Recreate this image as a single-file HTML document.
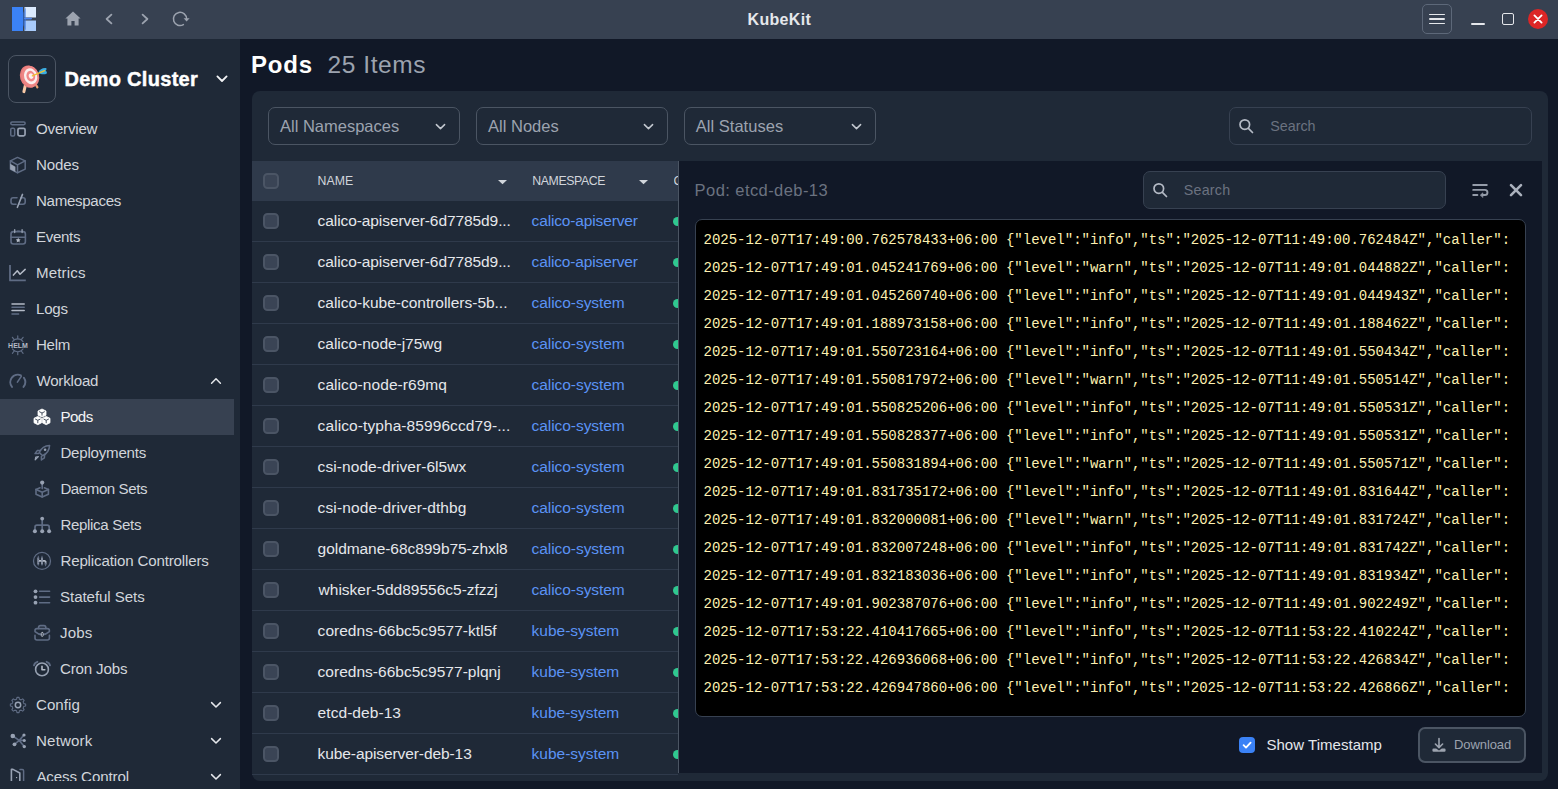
<!DOCTYPE html>
<html><head><meta charset="utf-8"><title>KubeKit</title>
<style>
*{box-sizing:border-box;margin:0;padding:0}
html,body{width:1558px;height:789px;overflow:hidden;background:#111827;font-family:"Liberation Sans",sans-serif;color:#e5e7eb}
svg{display:block;overflow:visible}
.abs{position:absolute}
#tb{position:absolute;left:0;top:0;width:1558px;height:39px;background:#374151}
#tb .title{position:absolute;left:749px;top:10px;font-weight:bold;font-size:16px;line-height:20px;color:#e5e7eb;white-space:nowrap}
#sb{position:absolute;left:0;top:39px;width:240px;height:750px;background:#1f2937;overflow:hidden}
#nav{position:absolute;left:0;top:0;width:240px;height:742px;overflow:hidden}
.ni{position:absolute;left:0;width:234px;height:36px}
.ni .t{position:absolute;left:36px;top:8px;font-size:15.1px;line-height:20px;color:#d1d5db;white-space:nowrap}
.ni.sub .t{left:60px}
.ni svg.ic{position:absolute;left:8px;top:8px;width:20px;height:20px}
.ni.sub svg.ic{left:32px}
.ni svg.ch{position:absolute;left:209px;top:12px;width:14px;height:12px}
.ni.sel{background:#374151}
.ni.sel .t{color:#f3f4f6}
#main{position:absolute;left:240px;top:39px;width:1318px;height:750px;background:#111827}
#h1{position:absolute;left:252px;top:50px;font-size:24px;line-height:30px;font-weight:bold;color:#fff;white-space:nowrap}
#h2{position:absolute;left:328px;top:50px;font-size:24.5px;line-height:30px;color:#9ca3af;white-space:nowrap}
#card{position:absolute;left:252px;top:91px;width:1296px;height:689.5px;background:#1f2937;border-radius:8px;overflow:hidden}
.sel-box{position:absolute;top:107px;width:192px;height:38px;border:1px solid #4b5563;border-radius:7px;background:#1f2937}
.sel-box .t{position:absolute;left:10px;top:8px;font-size:16.5px;line-height:20px;color:#9ca3af;white-space:nowrap}
.sel-box svg{position:absolute;left:166px;top:15px;width:11px;height:8px}
.srch{position:absolute;width:303px;height:38px;border:1px solid #374151;border-radius:7px;background:#1f2937}
.srch .t{position:absolute;left:40px;top:9px;font-size:14.3px;line-height:18px;color:#6b7280;white-space:nowrap}
.srch svg{position:absolute;left:9px;top:11px;width:16px;height:16px}
#thead{position:absolute;left:252px;top:161px;width:426px;height:40px;background:#2f3a4b}
.th{position:absolute;top:173.5px;font-size:12.3px;line-height:14px;color:#d1d5db;white-space:nowrap}
.cb{position:absolute;width:16px;height:16px;border-radius:4.5px;background:#3a4455;border:2px solid #4b5565}
.row{position:absolute;left:252px;width:426px;height:41px;border-bottom:1px solid #2f3a4b;overflow:hidden}
.row .n{position:absolute;left:66px;top:10px;font-size:15.5px;line-height:20px;color:#e5e7eb;white-space:nowrap}
.row .ns{position:absolute;left:280px;top:10px;font-size:15.5px;line-height:20px;color:#5b93f5;white-space:nowrap}
.row .dot{position:absolute;left:421px;top:15.5px;width:9px;height:9px;border-radius:5px;background:#30c890}
#panel{position:absolute;left:678px;top:161px;width:864px;height:612px;background:#111827;border-left:1px solid #4b5563}
#ptitle{position:absolute;left:695px;top:180px;font-size:16.5px;line-height:20px;color:#6b7280;white-space:nowrap}
#log{position:absolute;left:695px;top:219px;width:831px;height:498px;background:#000;border:1px solid #374151;border-radius:7px;overflow:hidden;padding:6px 0 0 7.5px;font-family:"Liberation Mono",monospace;font-size:14px;line-height:28px;color:#fdf0b0;white-space:pre}
#chk{position:absolute;left:1239px;top:737px;width:16px;height:16px;border-radius:4px;background:#3b82f6}
#chk svg{position:absolute;left:3px;top:3px;width:10px;height:10px}
#st{position:absolute;left:1266px;top:735px;font-size:15px;line-height:20px;color:#e5e7eb;white-space:nowrap}
#dl{position:absolute;left:1418px;top:727px;width:108px;height:36px;border:2px solid #4b5563;border-radius:7px;background:#1f2937}
#dl .t{position:absolute;left:34px;top:8px;font-size:13px;line-height:16px;color:#9ca3af;white-space:nowrap}
#dl svg{position:absolute;left:11px;top:8px;width:16px;height:16px}

</style></head><body>
<div id="tb">
<svg class="abs" style="left:12px;top:7px" width="24" height="24" viewBox="0 0 24 24"><rect x="0" y="0" width="11" height="24" fill="#3b82f6"/><rect x="12.5" y="0" width="11.5" height="10.5" fill="#dbeafe"/><rect x="12.5" y="13.5" width="11.5" height="10.5" fill="#a9cbfb"/><path d="M11 6 L14 0 V24 L11 18Z" fill="#2f6fe0" opacity="0.55"/><rect x="12" y="10.8" width="8" height="1.6" rx="0.8" fill="#4f86f0"/></svg>
<svg class="abs" style="left:65px;top:11px" width="16" height="15" viewBox="0 0 16 15"><path d="M8 0.6 L0.4 7.6 H2.4 V14.6 H6.4 V10 H9.6 V14.6 H13.6 V7.6 H15.6 Z" fill="#9ca3af"/></svg>
<svg class="abs" style="left:104px;top:13px" width="10" height="12" viewBox="0 0 10 12" fill="none" stroke="#9ca3af" stroke-width="1.8" stroke-linecap="round" stroke-linejoin="round"><path d="M7.4 1.6 L2.6 6 L7.4 10.4"/></svg>
<svg class="abs" style="left:140px;top:13px" width="10" height="12" viewBox="0 0 10 12" fill="none" stroke="#9ca3af" stroke-width="1.8" stroke-linecap="round" stroke-linejoin="round"><path d="M2.6 1.6 L7.4 6 L2.6 10.4"/></svg>
<svg class="abs" style="left:172px;top:11px" width="18" height="16" viewBox="0 0 18 16" fill="none" stroke="#9ca3af" stroke-width="1.5" stroke-linecap="round"><path d="M14.6 8 A6.6 6.6 0 1 0 11.4 13.6"/><path d="M11.6 7.2 H17.6 L14.6 10.6Z" fill="#9ca3af" stroke="none"/></svg>
<div class="title" id="ttl" style="letter-spacing:0.303px;margin-left:-1.40px;">KubeKit</div>
<div class="abs" style="left:1422px;top:4px;width:30px;height:30px;border:1.5px solid #5d6879;border-radius:5px"></div>
<div class="abs" style="left:1429px;top:13.7px;width:16px;height:1.7px;background:#e5e7eb;border-radius:1px"></div>
<div class="abs" style="left:1429px;top:18.1px;width:16px;height:1.7px;background:#e5e7eb;border-radius:1px"></div>
<div class="abs" style="left:1429px;top:22.5px;width:16px;height:1.7px;background:#e5e7eb;border-radius:1px"></div>
<div class="abs" style="left:1471px;top:23px;width:14px;height:2px;background:#e5e7eb;border-radius:1px"></div>
<div class="abs" style="left:1502px;top:13px;width:12px;height:12px;border:1.5px solid #e5e7eb;border-radius:2px"></div>
<div class="abs" style="left:1528px;top:9px;width:20px;height:20px;border-radius:10px;background:#dc2626"></div>
<svg class="abs" style="left:1533px;top:14px" width="10" height="10" viewBox="0 0 10 10" fill="none" stroke="#fff" stroke-width="1.8" stroke-linecap="round"><path d="M1.4 1.4 L8.6 8.6 M8.6 1.4 L1.4 8.6"/></svg>
</div>
<div id="sb">
<div class="abs" style="left:8px;top:16px;width:48px;height:48px;border:1.3px solid #4b5563;border-radius:8px"></div>
<svg class="abs" style="left:18px;top:23px" width="32" height="32" viewBox="0 0 32 32">

<path d="M7.6 22.4 L5.9 29.6" stroke="#f9c9a6" stroke-width="3" stroke-linecap="round"/>
<path d="M18.4 23.6 L19.4 25.4" stroke="#eaa070" stroke-width="2.2" stroke-linecap="round"/>
<ellipse cx="11.3" cy="14.6" rx="9.3" ry="11.3" transform="rotate(-17 11.3 14.6)" fill="#e87a7a"/>
<ellipse cx="12.3" cy="14.5" rx="8.8" ry="10.9" transform="rotate(-17 12.3 14.5)" fill="#ee8584"/>
<ellipse cx="12.6" cy="14.3" rx="6.5" ry="8.1" transform="rotate(-17 12.6 14.3)" fill="#fbeeee"/>
<ellipse cx="12.8" cy="14.2" rx="4.3" ry="5.4" transform="rotate(-17 12.8 14.2)" fill="#f08888"/>
<ellipse cx="13" cy="14.1" rx="2.2" ry="2.8" transform="rotate(-17 13 14.1)" fill="#fdf4f2"/>
<path d="M20.4 10.4 C21.4 7.4 25.4 5.4 28.4 6.2 C28.8 7.4 28.2 8.2 27.6 8.8 C28.6 9.2 29.2 10.2 28.8 11.4 C26.4 12.8 22.8 12.6 20.4 10.4Z" fill="#3cade0"/>
<path d="M14.4 13.9 L26.6 8.6" stroke="#f0c030" stroke-width="1.3" stroke-linecap="round"/>
</svg>
<div class="abs" id="dc" style="left:64px;top:27px;font-size:20px;line-height:26px;font-weight:bold;color:#fff;white-space:nowrap;-webkit-text-stroke:0.45px #fff;letter-spacing:0.310px;margin-left:0.40px;">Demo Cluster</div>
<svg class="abs" style="left:215px;top:35px" width="14" height="10" viewBox="0 0 14 10" fill="none" stroke="#f3f4f6" stroke-width="1.8" stroke-linecap="round" stroke-linejoin="round"><path d="M2.4 2.4 L7 7 L11.6 2.4"/></svg>
<div id="nav">
<div class="ni" style="top:72px"><svg class="ic" viewBox="0 0 20 20" fill="none" stroke="#5f6c84" stroke-width="1.5" stroke-linecap="round" stroke-linejoin="round"><rect x="2.75" y="3.05" width="14.4" height="2.6" rx="1.3"/><rect x="2.75" y="9.25" width="3.9" height="7.7" rx="1.3"/><rect x="9.95" y="9.35" width="7.1" height="7.5" rx="1.5" stroke="#98a2b3" stroke-width="1.7"/></svg><span class="t" id="nv0" style="letter-spacing:-0.202px;margin-left:0.00px;">Overview</span></div>
<div class="ni" style="top:108px"><svg class="ic" viewBox="0 0 20 20" fill="none" stroke="#5f6c84" stroke-width="1.5" stroke-linecap="round" stroke-linejoin="round"><path d="M9.5 2.4 L17.2 5.9 V14.1 L9.5 17.8 L2.4 14.1 V5.9 Z"/><path d="M2.4 5.9 L9.5 9.9 L17.2 5.9 M9.5 9.9 V17.8"/><path d="M2.2 8.8 L7.4 11.7 V17 L2.2 14.2 Z" fill="#98a2b3" stroke="none"/></svg><span class="t" id="nv1" style="letter-spacing:-0.150px;margin-left:0.00px;">Nodes</span></div>
<div class="ni" style="top:144px"><svg class="ic" viewBox="0 0 20 20" fill="none" stroke="#5f6c84" stroke-width="1.6" stroke-linecap="round" stroke-linejoin="round"><path d="M9 6.7 H5.2 Q3 6.7 3 8.9 V11 Q3 13.2 5.2 13.2 H8"/><path d="M13 6.7 H15 Q17.2 6.7 17.2 8.9 V11 Q17.2 13.2 15 13.2 H11.6"/><path d="M14.5 3.4 L9.4 16.3" stroke="#98a2b3" stroke-width="1.6"/></svg><span class="t" id="nv2" style="letter-spacing:-0.309px;margin-left:0.00px;">Namespaces</span></div>
<div class="ni" style="top:180px"><svg class="ic" viewBox="0 0 20 20" fill="none" stroke="#5f6c84" stroke-width="1.6" stroke-linecap="round" stroke-linejoin="round"><rect x="3" y="4.6" width="14.4" height="12.4" rx="2.4"/><path d="M3 10.2 H17.4"/><path d="M6.7 2.6 V5.6 M14.1 2.6 V5.6" stroke="#98a2b3" stroke-width="1.3"/><path d="M9.4 4.2 H11.4" stroke-width="1.2"/><path d="M10.2 10.8 l0.75 1.55 1.7 0.22 -1.25 1.18 0.32 1.7 -1.52 -0.85 -1.52 0.85 0.32 -1.7 -1.25 -1.18 1.7 -0.22z" fill="#b4bbc7" stroke="none"/></svg><span class="t" id="nv3" style="letter-spacing:-0.320px;margin-left:0.00px;">Events</span></div>
<div class="ni" style="top:216px"><svg class="ic" viewBox="0 0 20 20" fill="none" stroke="#5f6c84" stroke-width="1.5" stroke-linecap="round" stroke-linejoin="round"><path d="M2 2 V17.4 H17.8" stroke-width="1.8" stroke-linecap="butt"/><path d="M5.4 12.1 L9.3 7.7 L12 11.2 L17.2 6.4" stroke="#b4bbc7" stroke-width="1.5"/></svg><span class="t" id="nv4" style="letter-spacing:0.152px;margin-left:0.00px;">Metrics</span></div>
<div class="ni" style="top:252px"><svg class="ic" viewBox="0 0 20 20" fill="none" stroke="#5f6c84" stroke-width="1.5" stroke-linecap="round" stroke-linejoin="round"><path d="M4 4.9 H16.2 M4 11.6 H16.2" stroke="#b4bbc7"/><path d="M4 8.3 H16.2 M4 14.9 H10.6"/></svg><span class="t" id="nv5" style="letter-spacing:-0.268px;margin-left:0.00px;">Logs</span></div>
<div class="ni" style="top:288px"><svg class="ic" viewBox="0 0 20 20" fill="none" stroke="#5f6c84" stroke-width="1.2" stroke-linecap="round"><path d="M4.5 6.7 A6.4 6.4 0 0 1 15 6.7"/><path d="M4.5 14 A6.4 6.4 0 0 0 15 14"/><path d="M9.75 0.9 V3.3 M9.75 17.3 V19.7 M4.4 2.3 L6.2 4.6 M15.1 2.3 L13.3 4.6 M4.4 18.3 L6.2 16 M15.1 18.3 L13.3 16"/><text x="0.1" y="12.9" font-family="Liberation Sans" font-weight="bold" font-size="7.2" fill="#b4bbc7" stroke="none" textLength="19.8" lengthAdjust="spacingAndGlyphs">HELM</text></svg><span class="t" id="nv6" style="letter-spacing:-0.333px;margin-left:0.00px;">Helm</span></div>
<div class="ni" style="top:324px"><svg class="ic" viewBox="0 0 20 20" fill="none" stroke="#5f6c84" stroke-width="1.9" stroke-linecap="round" stroke-linejoin="round"><path d="M4 15.9 A7.5 7.5 0 0 1 12.9 4.3"/><path d="M15.9 6.8 A7.5 7.5 0 0 1 15.5 15.9"/><path d="M9.4 11.1 L13.3 5.4" stroke-width="1.6"/></svg><span class="t" id="nv7" style="letter-spacing:-0.195px;margin-left:0.40px;">Workload</span><svg class="ch" viewBox="0 0 14 12" fill="none" stroke="#e5e7eb" stroke-width="1.5" stroke-linecap="round" stroke-linejoin="round"><path d="M2.6 8.2 L7 3.8 L11.4 8.2"/></svg></div>
<div class="ni sub sel" style="top:360px"><svg class="ic" viewBox="0 0 20 20" fill="#fff" stroke="#fff" stroke-width="0.8" stroke-linejoin="round"><path d="M10 2 L14 4 V8.2 L10 10 L6 8.2 V4 Z"/><path d="M5.8 9.4 L9.6 11.3 V15.8 L5.8 17.7 L2 15.8 V11.3 Z"/><path d="M14.2 9.4 L18 11.3 V15.8 L14.2 17.7 L10.4 15.8 V11.3 Z"/><g fill="none" stroke="#374151" stroke-width="0.9"><path d="M7.2 4.6 L10 6 L12.8 4.6 M10 6 V8.6"/><path d="M3.2 12 L5.8 13.3 L8.4 12 M5.8 13.3 V16.2"/><path d="M11.6 12 L14.2 13.3 L16.8 12 M14.2 13.3 V16.2"/></g></svg><span class="t" id="nv8" style="letter-spacing:-0.532px;margin-left:0.40px;">Pods</span></div>
<div class="ni sub" style="top:396px"><svg class="ic" viewBox="0 0 20 20" fill="none" stroke="#5f6c84" stroke-width="1.5" stroke-linecap="round" stroke-linejoin="round"><path d="M17.6 2.4 C12.6 2.6 9.2 5.2 7.2 9.4 L10.6 12.8 C14.8 10.8 17.4 7.4 17.6 2.4Z"/><path d="M8.6 7.4 L5.2 7.6 L3 10.6 L6.6 10.6"/><path d="M12.6 11.4 L12.4 14.8 L9.4 17 L9.4 13.4"/><circle cx="13.1" cy="6.8" r="1.3" fill="#98a2b3" stroke="none"/><path d="M6.4 13.6 L3.2 16.8 L3.8 14 Z" stroke="#98a2b3" stroke-width="1.2"/></svg><span class="t" id="nv9" style="letter-spacing:-0.220px;margin-left:0.40px;">Deployments</span></div>
<div class="ni sub" style="top:432px"><svg class="ic" viewBox="0 0 20 20" fill="none" stroke="#5f6c84" stroke-width="1.6" stroke-linecap="round" stroke-linejoin="round"><path d="M8 8.8 L4 10.4 V15.2 L10.2 18 L16.4 15.2 V10.4 L12.4 8.8"/><path d="M4 10.4 L10.2 13.2 L16.4 10.4 M10.2 13.2 V18"/><path d="M10.2 5 V9.6"/><circle cx="10.2" cy="3.6" r="2.1" fill="#98a2b3" stroke="none"/></svg><span class="t" id="nv10" style="letter-spacing:-0.440px;margin-left:0.40px;">Daemon Sets</span></div>
<div class="ni sub" style="top:468px"><svg class="ic" viewBox="0 0 20 20" fill="none" stroke="#5f6c84" stroke-width="1.5" stroke-linecap="round" stroke-linejoin="round"><path d="M10.2 4.4 V15 M3 15.4 V12.2 Q3 10.2 5 10.2 H15.2 Q17.2 10.2 17.2 12.2 V15.4" stroke-width="1.7"/><circle cx="10.2" cy="3.6" r="1.9" fill="#98a2b3" stroke="none"/><circle cx="2.9" cy="16.3" r="2" fill="#98a2b3" stroke="none"/><circle cx="10.2" cy="16.3" r="2" fill="#98a2b3" stroke="none"/><circle cx="17.1" cy="16.3" r="2" fill="#98a2b3" stroke="none"/></svg><span class="t" id="nv11" style="letter-spacing:-0.333px;margin-left:0.40px;">Replica Sets</span></div>
<div class="ni sub" style="top:504px"><svg class="ic" viewBox="0 0 20 20" fill="none" stroke="#5f6c84" stroke-width="1.5" stroke-linecap="round" stroke-linejoin="round"><circle cx="10" cy="9.9" r="8.5" stroke-width="1.3"/><path d="M6.3 6.6 V13.4 M10 6.6 V13.4 M13.6 9.9 V13.4 M6.3 9.9 H13.6" stroke="#b4bbc7" stroke-width="1.7" stroke-linecap="butt"/><path d="M6.3 5.2 V14.8 M10 5.2 V14.8 M13.6 12 V14.8" stroke-width="1" stroke-dasharray="1 1"/></svg><span class="t" id="nv12" style="letter-spacing:-0.154px;margin-left:0.40px;">Replication Controllers</span></div>
<div class="ni sub" style="top:540px"><svg class="ic" viewBox="0 0 20 20" fill="none" stroke="#5f6c84" stroke-width="1.5" stroke-linecap="round" stroke-linejoin="round"><path d="M7.6 4.3 H17.6 M7.6 10.1 H17.6 M7.6 15.7 H17.6" stroke-width="1.6"/><circle cx="3.5" cy="4.3" r="1.9" fill="#98a2b3" stroke="none"/><circle cx="3.5" cy="10.1" r="1.9" fill="#98a2b3" stroke="none"/><circle cx="3.5" cy="15.7" r="1.9" fill="#98a2b3" stroke="none"/></svg><span class="t" id="nv13" style="letter-spacing:-0.066px;margin-left:0.00px;">Stateful Sets</span></div>
<div class="ni sub" style="top:576px"><svg class="ic" viewBox="0 0 20 20" fill="none" stroke="#5f6c84" stroke-width="1.6" stroke-linecap="round" stroke-linejoin="round"><path d="M3 12.4 V15 Q3 17 5 17 H15.4 Q17.4 17 17.4 15 V12.4"/><path d="M5 5.6 H15.4 Q17.4 5.6 17.4 7.6 V8.6 Q14 11.6 10.2 11.6 Q6.4 11.6 3 8.6 V7.6 Q3 5.6 5 5.6Z"/><path d="M6.6 5.4 V4.4 Q6.6 2.6 8.4 2.6 H12 Q13.8 2.6 13.8 4.4 V5.4"/><rect x="9.3" y="9.4" width="1.8" height="4" rx="0.9" fill="#1f2937" stroke="#b4bbc7" stroke-width="1"/></svg><span class="t" id="nv14" style="letter-spacing:0.135px;margin-left:0.00px;">Jobs</span></div>
<div class="ni sub" style="top:612px"><svg class="ic" viewBox="0 0 20 20" fill="none" stroke="#5f6c84" stroke-width="1.5" stroke-linecap="round" stroke-linejoin="round"><circle cx="10" cy="10.4" r="6.4" stroke="#98a2b3" stroke-width="1.6"/><path d="M10 7.2 V10.8 H12.8" stroke="#b4bbc7" stroke-width="1.6"/><path d="M2 6.4 Q2.6 3.6 5.4 2.8 M18 6.4 Q17.4 3.6 14.6 2.8" stroke-width="1.9"/></svg><span class="t" id="nv15" style="letter-spacing:-0.166px;margin-left:0.00px;">Cron Jobs</span></div>
<div class="ni" style="top:648px"><svg class="ic" viewBox="0 0 20 20" fill="none" stroke="#5f6c84" stroke-width="1.5" stroke-linecap="round" stroke-linejoin="round"><path d="M8.60 4.17 L8.97 2.37 L11.03 2.37 L11.40 4.17 L13.13 4.88 L14.67 3.88 L16.12 5.33 L15.12 6.87 L15.83 8.60 L17.63 8.97 L17.63 11.03 L15.83 11.40 L15.12 13.13 L16.12 14.67 L14.67 16.12 L13.13 15.12 L11.40 15.83 L11.03 17.63 L8.97 17.63 L8.60 15.83 L6.87 15.12 L5.33 16.12 L3.88 14.67 L4.88 13.13 L4.17 11.40 L2.37 11.03 L2.37 8.97 L4.17 8.60 L4.88 6.87 L3.88 5.33 L5.33 3.88 L6.87 4.88Z" stroke-width="1.1"/><circle cx="10" cy="10" r="2.7" stroke="#98a2b3" stroke-width="1.5"/></svg><span class="t" id="nv16" style="letter-spacing:0.040px;margin-left:0.00px;">Config</span><svg class="ch" viewBox="0 0 14 12" fill="none" stroke="#e5e7eb" stroke-width="1.5" stroke-linecap="round" stroke-linejoin="round"><path d="M2.6 3.6 L7 8 L11.4 3.6"/></svg></div>
<div class="ni" style="top:684px"><svg class="ic" viewBox="0 0 20 20" fill="none" stroke="#5f6c84" stroke-width="1.5" stroke-linecap="round" stroke-linejoin="round"><path d="M4.8 5 L11.2 9.4 L16 4 M6.5 13.3 L11.2 9.4 L16.3 15.6 M11.2 9.4 H16.3" stroke-width="1.6"/><circle cx="4.8" cy="5" r="2.3" fill="#98a2b3" stroke="none"/><circle cx="16" cy="4" r="1.6" fill="#98a2b3" stroke="none"/><circle cx="16.3" cy="9.4" r="1.5" fill="#98a2b3" stroke="none"/><circle cx="6.5" cy="13.3" r="1.9" fill="#98a2b3" stroke="none"/><circle cx="16.3" cy="15.6" r="1.7" fill="#98a2b3" stroke="none"/></svg><span class="t" id="nv17" style="letter-spacing:0.167px;margin-left:0.00px;">Network</span><svg class="ch" viewBox="0 0 14 12" fill="none" stroke="#e5e7eb" stroke-width="1.5" stroke-linecap="round" stroke-linejoin="round"><path d="M2.6 3.6 L7 8 L11.4 3.6"/></svg></div>
<div class="ni" style="top:720px"><svg class="ic" viewBox="0 0 20 20" fill="none" stroke="#5f6c84" stroke-width="1.5" stroke-linecap="round" stroke-linejoin="round"><path d="M12 2.4 H14.2 Q15.6 2.4 15.6 3.8 V17"/><path d="M3.4 17 V2.4 H5 L11.8 6 V17" stroke="#98a2b3" stroke-width="1.6"/><circle cx="8.6" cy="10.6" r="0.7" fill="#b4bbc7" stroke="none"/></svg><span class="t" id="nv18" style="letter-spacing:-0.098px;margin-left:0.40px;">Acess Control</span><svg class="ch" viewBox="0 0 14 12" fill="none" stroke="#e5e7eb" stroke-width="1.5" stroke-linecap="round" stroke-linejoin="round"><path d="M2.6 3.6 L7 8 L11.4 3.6"/></svg></div>
</div></div>
<div id="main"></div>
<div id="h1" style="letter-spacing:0.800px;margin-left:-1.00px;">Pods</div><div id="h2" style="letter-spacing:0.597px;margin-left:-0.60px;">25 Items</div>
<div id="card"></div>
<div class="sel-box" style="left:268px"><span class="t" id="s1" style="letter-spacing:-0.000px;margin-left:1.00px;">All Namespaces</span><svg viewBox="0 0 11 8" fill="none" stroke="#c3c8d0" stroke-width="1.5" stroke-linecap="round" stroke-linejoin="round"><path d="M1.4 1.6 L5.5 5.6 L9.6 1.6"/></svg></div>
<div class="sel-box" style="left:476px"><span class="t" id="s2" style="letter-spacing:0.016px;margin-left:1.00px;">All Nodes</span><svg viewBox="0 0 11 8" fill="none" stroke="#c3c8d0" stroke-width="1.5" stroke-linecap="round" stroke-linejoin="round"><path d="M1.4 1.6 L5.5 5.6 L9.6 1.6"/></svg></div>
<div class="sel-box" style="left:684px"><span class="t" id="s3" style="letter-spacing:0.020px;margin-left:0.80px;">All Statuses</span><svg viewBox="0 0 11 8" fill="none" stroke="#c3c8d0" stroke-width="1.5" stroke-linecap="round" stroke-linejoin="round"><path d="M1.4 1.6 L5.5 5.6 L9.6 1.6"/></svg></div>
<div class="srch" style="left:1229px;top:107px"><svg viewBox="0 0 16 16" fill="none" stroke="#b4bac5" stroke-width="1.7" stroke-linecap="round"><circle cx="5.8" cy="5.6" r="4.8"/><path d="M9.4 9.3 L13.5 13.5"/></svg><span class="t" id="q1" style="letter-spacing:0.000px;margin-left:0.20px;">Search</span></div>
<div id="thead"></div>
<span class="cb" style="left:263px;top:173px"></span>
<span class="th" id="th1" style="left:318px;letter-spacing:0.002px;margin-left:-0.40px;">NAME</span>
<svg class="abs" style="left:497.5px;top:179.5px" width="9" height="4.2" viewBox="0 0 9 4.2"><path d="M0 0 H9 L4.5 4.2Z" fill="#d1d5db"/></svg>
<span class="th" id="th2" style="left:532px;letter-spacing:-0.372px;margin-left:0.20px;">NAMESPACE</span>
<svg class="abs" style="left:638.5px;top:179.5px" width="9" height="4.2" viewBox="0 0 9 4.2"><path d="M0 0 H9 L4.5 4.2Z" fill="#d1d5db"/></svg>
<span class="th" style="left:673.5px;width:4.5px;overflow:hidden">CONTAINERS</span>
<div class="row" style="top:201px"><span class="cb" style="left:11px;top:12px"></span><span class="n" id="rn0" style="letter-spacing:-0.085px;margin-left:-0.40px;">calico-apiserver-6d7785d9...</span><span class="ns" id="rs0" style="letter-spacing:-0.150px;margin-left:-0.40px;">calico-apiserver</span><span class="dot"></span></div>
<div class="row" style="top:242px"><span class="cb" style="left:11px;top:12px"></span><span class="n" id="rn1" style="letter-spacing:-0.085px;margin-left:-0.40px;">calico-apiserver-6d7785d9...</span><span class="ns" id="rs1" style="letter-spacing:-0.150px;margin-left:-0.40px;">calico-apiserver</span><span class="dot"></span></div>
<div class="row" style="top:283px"><span class="cb" style="left:11px;top:12px"></span><span class="n" id="rn2" style="letter-spacing:-0.019px;margin-left:-0.40px;">calico-kube-controllers-5b...</span><span class="ns" id="rs2" style="letter-spacing:-0.063px;margin-left:-0.40px;">calico-system</span><span class="dot"></span></div>
<div class="row" style="top:324px"><span class="cb" style="left:11px;top:12px"></span><span class="n" id="rn3" style="letter-spacing:-0.028px;margin-left:-0.40px;">calico-node-j75wg</span><span class="ns" id="rs3" style="letter-spacing:-0.063px;margin-left:-0.40px;">calico-system</span><span class="dot"></span></div>
<div class="row" style="top:365px"><span class="cb" style="left:11px;top:12px"></span><span class="n" id="rn4" style="letter-spacing:0.062px;margin-left:-0.40px;">calico-node-r69mq</span><span class="ns" id="rs4" style="letter-spacing:-0.063px;margin-left:-0.40px;">calico-system</span><span class="dot"></span></div>
<div class="row" style="top:406px"><span class="cb" style="left:11px;top:12px"></span><span class="n" id="rn5" style="letter-spacing:0.085px;margin-left:-0.40px;">calico-typha-85996ccd79-...</span><span class="ns" id="rs5" style="letter-spacing:-0.063px;margin-left:-0.40px;">calico-system</span><span class="dot"></span></div>
<div class="row" style="top:447px"><span class="cb" style="left:11px;top:12px"></span><span class="n" id="rn6" style="letter-spacing:0.070px;margin-left:-0.40px;">csi-node-driver-6l5wx</span><span class="ns" id="rs6" style="letter-spacing:-0.063px;margin-left:-0.40px;">calico-system</span><span class="dot"></span></div>
<div class="row" style="top:488px"><span class="cb" style="left:11px;top:12px"></span><span class="n" id="rn7" style="letter-spacing:0.120px;margin-left:-0.40px;">csi-node-driver-dthbg</span><span class="ns" id="rs7" style="letter-spacing:-0.063px;margin-left:-0.40px;">calico-system</span><span class="dot"></span></div>
<div class="row" style="top:529px"><span class="cb" style="left:11px;top:12px"></span><span class="n" id="rn8" style="letter-spacing:-0.054px;margin-left:-0.40px;">goldmane-68c899b75-zhxl8</span><span class="ns" id="rs8" style="letter-spacing:-0.063px;margin-left:-0.40px;">calico-system</span><span class="dot"></span></div>
<div class="row" style="top:570px"><span class="cb" style="left:11px;top:12px"></span><span class="n" id="rn9" style="letter-spacing:0.000px;margin-left:0.60px;">whisker-5dd89556c5-zfzzj</span><span class="ns" id="rs9" style="letter-spacing:-0.063px;margin-left:-0.40px;">calico-system</span><span class="dot"></span></div>
<div class="row" style="top:611px"><span class="cb" style="left:11px;top:12px"></span><span class="n" id="rn10" style="letter-spacing:0.027px;margin-left:-0.40px;">coredns-66bc5c9577-ktl5f</span><span class="ns" id="rs10" style="letter-spacing:-0.020px;margin-left:-0.40px;">kube-system</span><span class="dot"></span></div>
<div class="row" style="top:652px"><span class="cb" style="left:11px;top:12px"></span><span class="n" id="rn11" style="letter-spacing:0.014px;margin-left:-0.40px;">coredns-66bc5c9577-plqnj</span><span class="ns" id="rs11" style="letter-spacing:-0.020px;margin-left:-0.40px;">kube-system</span><span class="dot"></span></div>
<div class="row" style="top:693px"><span class="cb" style="left:11px;top:12px"></span><span class="n" id="rn12" style="letter-spacing:0.060px;margin-left:-0.40px;">etcd-deb-13</span><span class="ns" id="rs12" style="letter-spacing:-0.020px;margin-left:-0.40px;">kube-system</span><span class="dot"></span></div>
<div class="row" style="top:734px"><span class="cb" style="left:11px;top:12px"></span><span class="n" id="rn13" style="letter-spacing:-0.090px;margin-left:-0.40px;">kube-apiserver-deb-13</span><span class="ns" id="rs13" style="letter-spacing:-0.020px;margin-left:-0.40px;">kube-system</span><span class="dot"></span></div>
<div id="panel"></div>
<div id="ptitle" style="letter-spacing:0.428px;margin-left:-0.40px;">Pod: etcd-deb-13</div>
<div class="srch" style="left:1143px;top:171px"><svg viewBox="0 0 16 16" fill="none" stroke="#b4bac5" stroke-width="1.7" stroke-linecap="round"><circle cx="5.8" cy="5.6" r="4.8"/><path d="M9.4 9.3 L13.5 13.5"/></svg><span class="t" id="q2" style="letter-spacing:0.200px;margin-left:-0.20px;">Search</span></div>
<svg class="abs" style="left:1472px;top:183px" width="17" height="15" viewBox="0 0 17 15" fill="none" stroke="#959ca9" stroke-width="1.9" stroke-linecap="round" stroke-linejoin="round"><path d="M1.2 2 H14.8 M1.2 6.9 H12.9 A2.55 2.55 0 0 1 12.9 12 H10.6 M1.2 12 H5.4"/><path d="M8.4 12 L10.9 9.8 V14.2Z" fill="#959ca9" stroke-width="0.6"/></svg>
<svg class="abs" style="left:1509px;top:183px" width="14" height="14" viewBox="0 0 14 14" fill="none" stroke="#abb1bd" stroke-width="2.6" stroke-linecap="round"><path d="M2 2.1 L12 12.1 M12 2.1 L2 12.1"/></svg>
<div id="log">2025-12-07T17:49:00.762578433+06:00 {"level":"info","ts":"2025-12-07T11:49:00.762484Z","caller":
2025-12-07T17:49:01.045241769+06:00 {"level":"warn","ts":"2025-12-07T11:49:01.044882Z","caller":
2025-12-07T17:49:01.045260740+06:00 {"level":"info","ts":"2025-12-07T11:49:01.044943Z","caller":
2025-12-07T17:49:01.188973158+06:00 {"level":"info","ts":"2025-12-07T11:49:01.188462Z","caller":
2025-12-07T17:49:01.550723164+06:00 {"level":"info","ts":"2025-12-07T11:49:01.550434Z","caller":
2025-12-07T17:49:01.550817972+06:00 {"level":"warn","ts":"2025-12-07T11:49:01.550514Z","caller":
2025-12-07T17:49:01.550825206+06:00 {"level":"info","ts":"2025-12-07T11:49:01.550531Z","caller":
2025-12-07T17:49:01.550828377+06:00 {"level":"info","ts":"2025-12-07T11:49:01.550531Z","caller":
2025-12-07T17:49:01.550831894+06:00 {"level":"warn","ts":"2025-12-07T11:49:01.550571Z","caller":
2025-12-07T17:49:01.831735172+06:00 {"level":"info","ts":"2025-12-07T11:49:01.831644Z","caller":
2025-12-07T17:49:01.832000081+06:00 {"level":"warn","ts":"2025-12-07T11:49:01.831724Z","caller":
2025-12-07T17:49:01.832007248+06:00 {"level":"info","ts":"2025-12-07T11:49:01.831742Z","caller":
2025-12-07T17:49:01.832183036+06:00 {"level":"info","ts":"2025-12-07T11:49:01.831934Z","caller":
2025-12-07T17:49:01.902387076+06:00 {"level":"info","ts":"2025-12-07T11:49:01.902249Z","caller":
2025-12-07T17:53:22.410417665+06:00 {"level":"info","ts":"2025-12-07T11:53:22.410224Z","caller":
2025-12-07T17:53:22.426936068+06:00 {"level":"info","ts":"2025-12-07T11:53:22.426834Z","caller":
2025-12-07T17:53:22.426947860+06:00 {"level":"info","ts":"2025-12-07T11:53:22.426866Z","caller":</div>
<div id="chk"><svg viewBox="0 0 10 10" fill="none" stroke="#fff" stroke-width="1.8" stroke-linecap="round" stroke-linejoin="round"><path d="M1.6 5.2 L4 7.6 L8.6 2.6"/></svg></div>
<div id="st" style="letter-spacing:0.039px;margin-left:0.40px;">Show Timestamp</div>
<div id="dl"><svg viewBox="0 0 16 16" fill="none" stroke="#9ca3af" stroke-width="1.6" stroke-linecap="round" stroke-linejoin="round"><path d="M8 1.6 V10.4 M4.4 7 L8 10.6 L11.6 7"/><path d="M2.6 11.6 H5.2 L8 13.4 L10.8 11.6 H13.4 Q14.6 11.6 14.6 12.8 V13.6 Q14.6 14.8 13.4 14.8 H2.6 Q1.4 14.8 1.4 13.6 V12.8 Q1.4 11.6 2.6 11.6Z" fill="#9ca3af" stroke="none"/></svg><span class="t" id="dlt" style="letter-spacing:-0.089px;margin-left:0.00px;">Download</span></div>
</body></html>
